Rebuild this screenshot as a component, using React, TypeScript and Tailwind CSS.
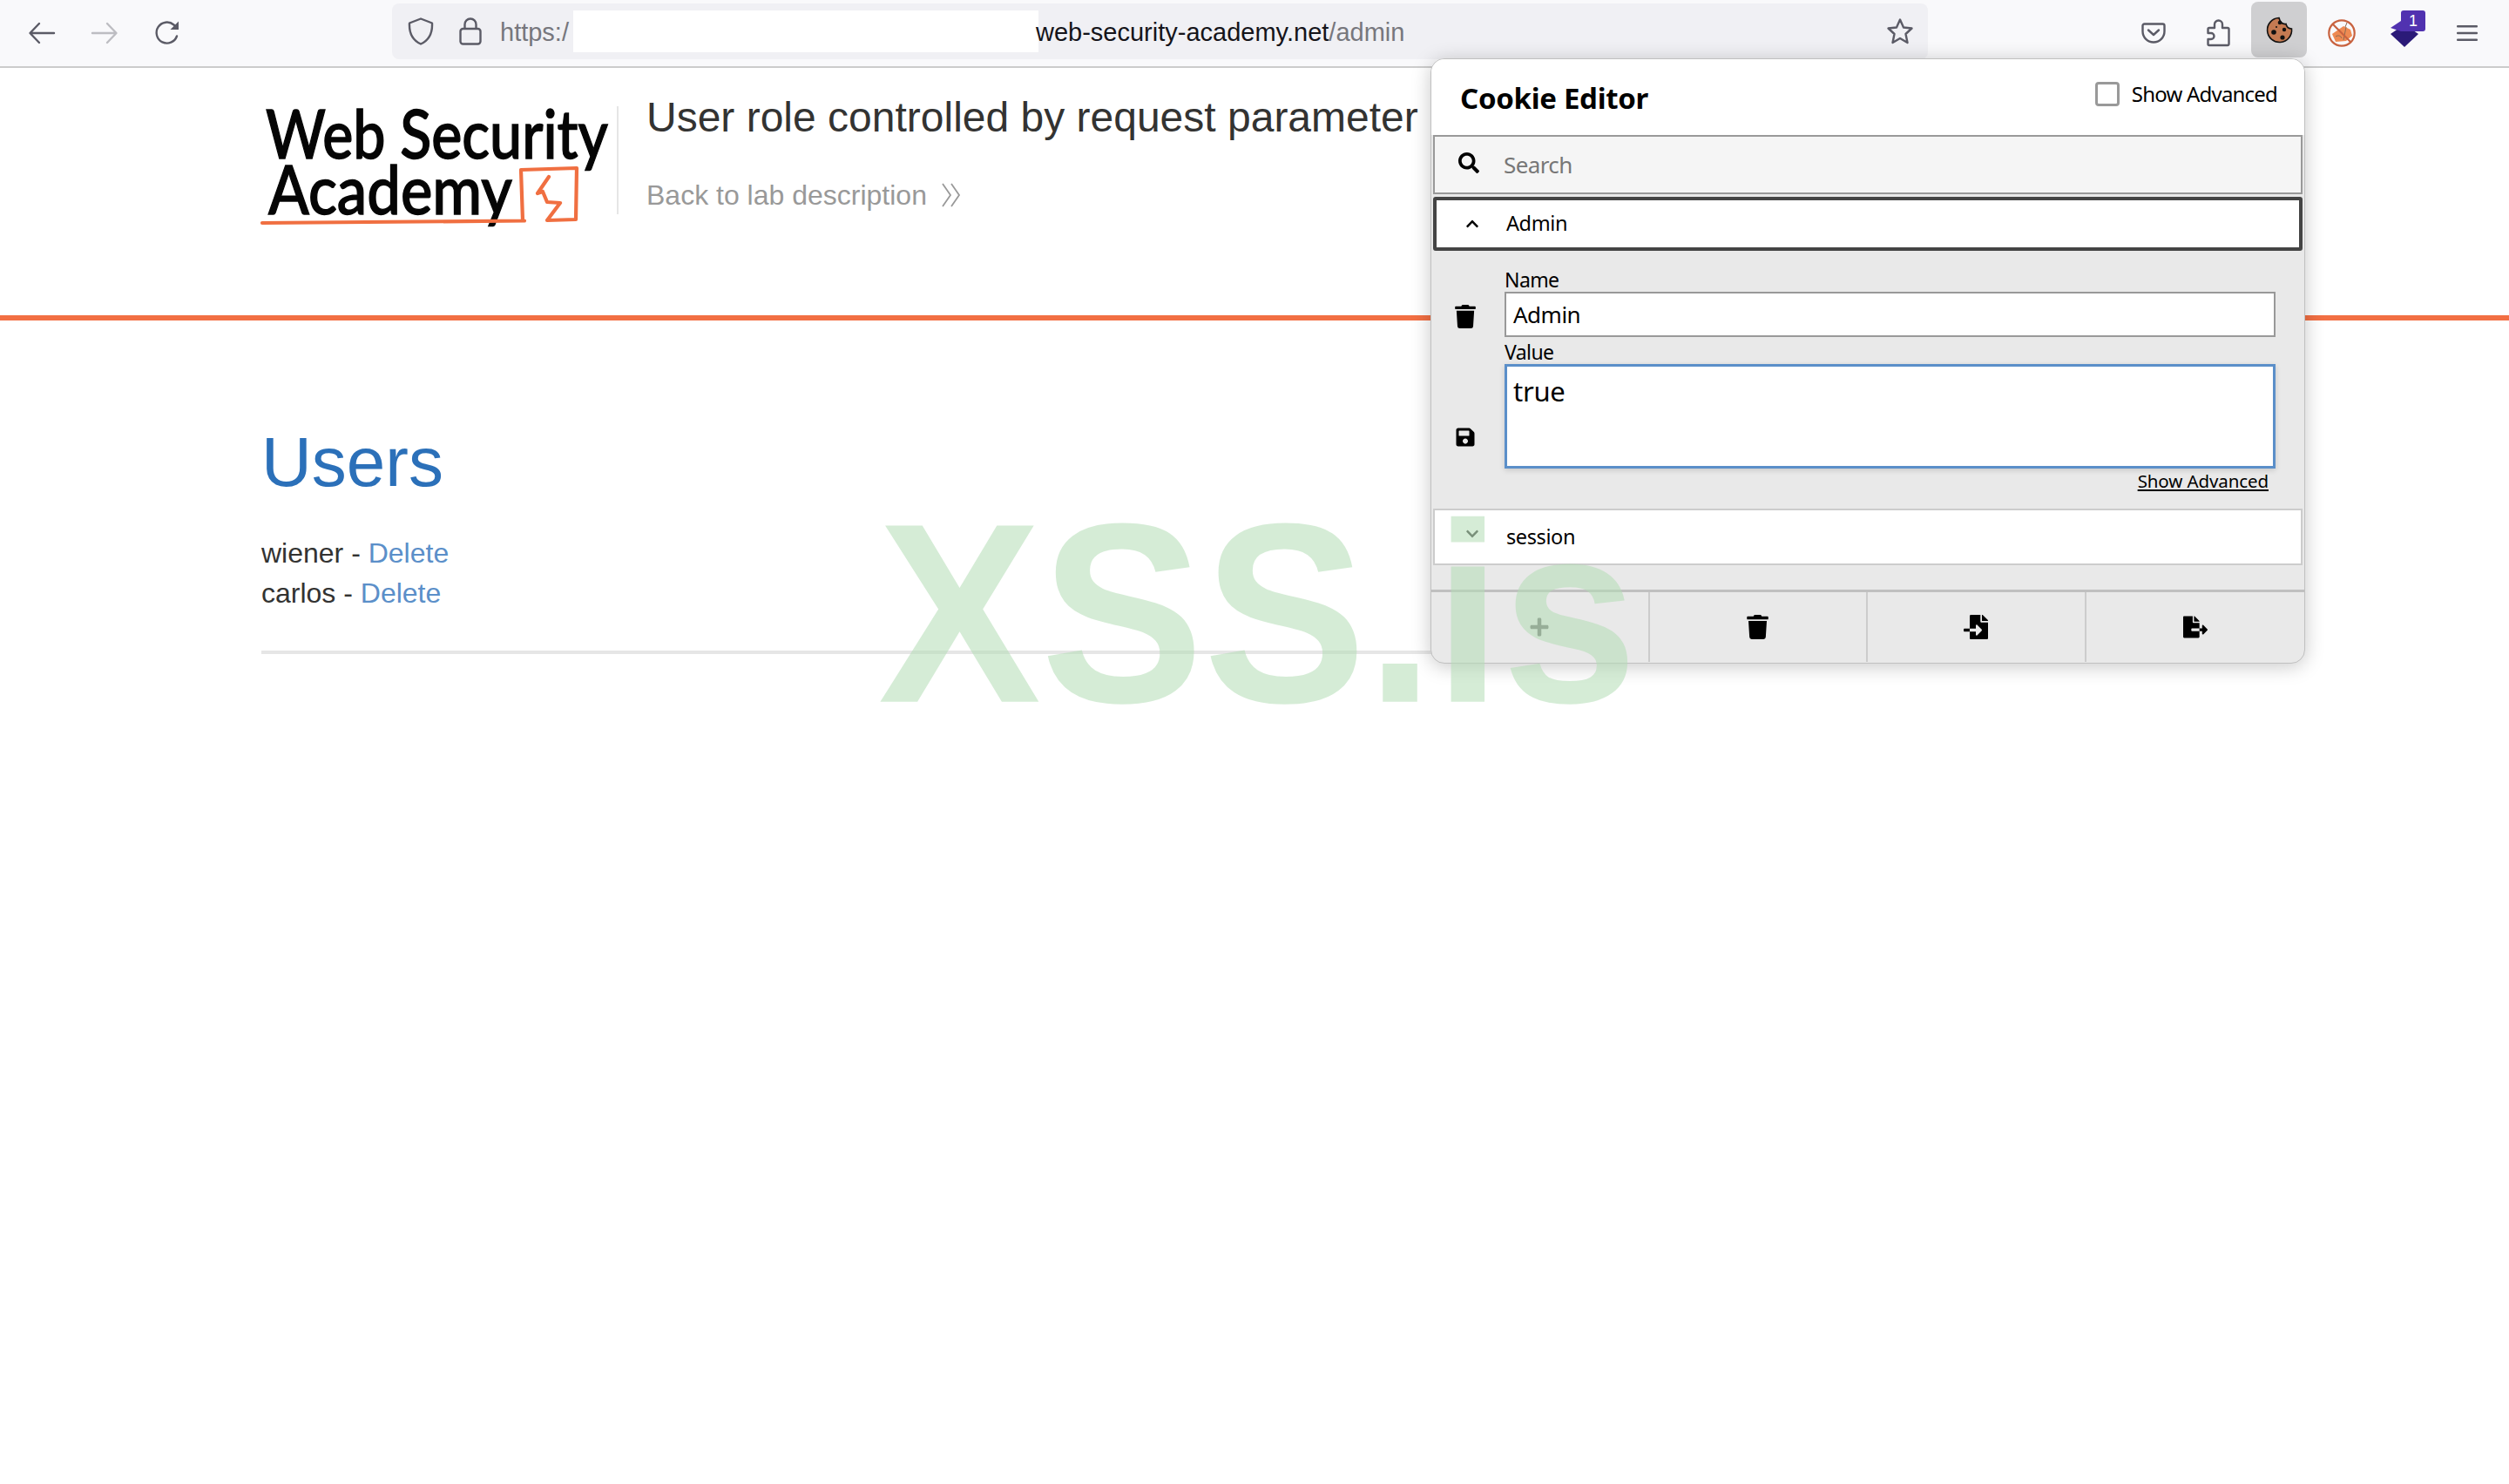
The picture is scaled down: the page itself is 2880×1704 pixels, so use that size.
import { FaChevronDown, FaChevronUp, FaFileExport, FaFileImport, FaPlus, FaSave, FaSearch, FaTrash } from "react-icons/fa";

const popupFont = "font-['Noto_Sans',sans-serif]";

function Back() {
  return (
    <svg width="32" height="32" viewBox="0 0 32 32" fill="none" stroke="#5b5b66" strokeWidth="2.4" strokeLinecap="round" strokeLinejoin="round">
      <path d="M30 16H3M13 5 2.5 16 13 27" />
    </svg>
  );
}

function Forward() {
  return (
    <svg width="32" height="32" viewBox="0 0 32 32" fill="none" stroke="#bdbdc2" strokeWidth="2.4" strokeLinecap="round" strokeLinejoin="round">
      <path d="M2 16h27M19 5l10.500 11L19 27" />
    </svg>
  );
}

function Reload() {
  return (
    <svg width="32" height="32" viewBox="0 0 32 32" fill="none">
      <path d="M27 19.500A12 12 0 1 1 23.500 6.500L27 10" stroke="#5b5b66" strokeWidth="2.4" strokeLinecap="round" />
      <path d="M29 2.500V12H19.500Z" fill="#5b5b66" />
    </svg>
  );
}

function Shield() {
  return (
    <svg width="30" height="32" viewBox="0 0 30 32" fill="none" stroke="#5b5b66" strokeWidth="2.400" strokeLinejoin="round">
      <path d="M15 1.500 28 6.500C28.500 17 25 26 15 30.500 5 26 1.500 17 2 6.500Z" />
    </svg>
  );
}

function Lock() {
  return (
    <svg width="26" height="32" viewBox="0 0 26 32" fill="none" stroke="#5b5b66" strokeWidth="2.400">
      <rect x="1.500" y="13" width="23" height="17.500" rx="3" />
      <path d="M6.500 13V8a6.500 6.500 0 0 1 13 0v5" />
    </svg>
  );
}

function Star() {
  return (
    <svg width="32" height="32" viewBox="0 0 32 32" fill="none" stroke="#5b5b66" strokeWidth="2.400" strokeLinejoin="round">
      <path d="M16 2.500 20 11.500 29.500 12.500 22.500 19 24.500 29 16 24 7.500 29 9.500 19 2.500 12.500 12 11.500Z" />
    </svg>
  );
}

function Pocket() {
  return (
    <svg width="28" height="24" viewBox="0 0 28 24" fill="none" stroke="#5b5b66" strokeWidth="2.400" strokeLinecap="round" strokeLinejoin="round">
      <path d="M3.500 1.500h21a2 2 0 0 1 2 2V10a12.500 12.500 0 0 1-25 0V3.500a2 2 0 0 1 2-2Z" />
      <path d="m8 8.500 6 5.500 6-5.500" />
    </svg>
  );
}

function Puzzle() {
  return (
    <svg width="28" height="32" viewBox="0 0 28 32" fill="none" stroke="#5b5b66" strokeWidth="2.400" strokeLinejoin="round">
      <path d="M10 10V6a4.500 4.500 0 0 1 9 0v4h6a1.500 1.500 0 0 1 1.500 1.500v17A1.500 1.500 0 0 1 25 30H4a1.500 1.500 0 0 1-1.500-1.500V23H6a3.500 3.500 0 0 0 0-7H2.500v-4.500A1.500 1.500 0 0 1 4 10Z" />
    </svg>
  );
}

function CookieIcon() {
  return (
    <svg width="32" height="32" viewBox="0 0 32 32">
      <path d="M16 2.500A14 14 0 1 0 30.500 15C26.500 15 24.500 12 24 9.500C20 10 17 7 16 2.500Z" fill="#c47a52" stroke="#111" strokeWidth="1.600" />
      <circle cx="17" cy="8" r="2.300" fill="#111" />
      <circle cx="10" cy="19" r="2.800" fill="#111" />
      <circle cx="22" cy="16" r="2.200" fill="#111" />
      <circle cx="20" cy="25" r="2.600" fill="#111" />
      <circle cx="13" cy="13" r="1" fill="#111" />
    </svg>
  );
}

function Blocker() {
  return (
    <svg width="32" height="32" viewBox="0 0 32 32" fill="none">
      <path d="M5 17 18 8l8 4 2 7-7 6-12 1Z" fill="#ee8a52" />
      <path d="M9 20c3-2 6-1 7 2M21 9l-3 15M22 4l-2 5M8 8l3 4" stroke="#8a6a52" strokeWidth="1" />
      <circle cx="16" cy="16" r="14.700" stroke="#c8623f" strokeWidth="2.200" />
      <path d="M6 6l20 20" stroke="#c8623f" strokeWidth="2.200" />
    </svg>
  );
}

function Flag() {
  return (
    <div className="relative w-[40px] h-[42px]">
      <svg className="absolute left-0 top-0" width="40" height="42" viewBox="0 0 40 42">
        <path d="M0 27 16 16 32 27 16 42Z" fill="#2b1a78" />
        <path d="M0 20 12 12h20v12H12Z" fill="#5132b0" />
      </svg>
      <span className="absolute right-0 top-0 w-[28px] h-[24px] rounded-[3px] bg-[#5132b0] text-white text-[18px] leading-[24px] text-center font-['Liberation_Sans',sans-serif]">
        1
      </span>
    </div>
  );
}

function Menu() {
  return (
    <svg width="24" height="18" viewBox="0 0 24 18" fill="#5b5b66">
      <rect y="0" width="24" height="2.400" rx="1" />
      <rect y="7.800" width="24" height="2.400" rx="1" />
      <rect y="15.600" width="24" height="2.400" rx="1" />
    </svg>
  );
}

function Toolbar() {
  return (
    <div className="h-[78px] bg-[#f9f9fb] border-b-2 border-[#cccccc] flex items-start font-['Liberation_Sans',sans-serif]">
      <div className="w-[450px] h-[76px] flex items-center pl-[32px] gap-[40px]">
        <Back />
        <Forward />
        <Reload />
      </div>
      <div className="mt-[4px] w-[1763px] h-[64px] rounded-[8px] bg-[#f0f0f4] flex items-center">
        <div className="w-[124px] pl-[18px] flex items-center gap-[29px] shrink-0">
          <Shield />
          <Lock />
        </div>
        <span className="text-[29px] leading-[36px] mt-[2px] text-[#77777d] w-[84px] shrink-0 overflow-hidden">https:/</span>
        <div className="w-[534px] h-[48px] bg-white shrink-0" />
        <span className="text-[29px] leading-[36px] mt-[2px] text-[#15141a] whitespace-nowrap -ml-[3px]">web-security-academy.net</span>
        <span className="text-[29px] leading-[36px] mt-[2px] text-[#77777d]">/admin</span>
        <div className="ml-auto pr-[16px]">
          <Star />
        </div>
      </div>
      <div className="flex-1 h-[76px] relative flex items-center pl-[245px]">
        <Pocket />
        <div className="ml-[46px]">
          <Puzzle />
        </div>
        <div className="ml-[24px] mt-[-8px] w-[64px] h-[64px] rounded-[8px] bg-[#cfcfd1] flex items-center justify-center">
          <CookieIcon />
        </div>
        <div className="ml-[24px]">
          <Blocker />
        </div>
        <div className="ml-[40px] -mt-[10px]">
          <Flag />
        </div>
        <div className="ml-[36px]">
          <Menu />
        </div>
      </div>
    </div>
  );
}

function Logo() {
  return (
    <svg width="420" height="180" viewBox="0 0 420 180" className="shrink-0" fontFamily="Lato, sans-serif" fontWeight="500" fill="#050505" stroke="#050505" strokeWidth="1.400">
      <text x="25" y="82" fontSize="78" textLength="393" lengthAdjust="spacingAndGlyphs">Web Security</text>
      <text x="28" y="146" fontSize="78" textLength="280" lengthAdjust="spacingAndGlyphs">Academy</text>
      <path d="M21 156 322 153.500M320 153 318 95 382 93 381 152 348 153 363 133 348 132 343 120 337 122 350 103" fill="none" stroke="#f06f41" strokeWidth="4.200" strokeLinejoin="round" strokeLinecap="round" />
    </svg>
  );
}

function Row({ icon, label, active }: { icon: React.ReactNode; label: string; active?: boolean }) {
  return (
    <div className={active ? "mx-[2px] mt-[3px] h-[62px] border-[4px] border-[#444444] rounded-[3px] bg-white flex items-center" : "mx-[2px] h-[65px] border-2 border-[#cccccc] bg-white flex items-center"}>
      <div className={active ? "w-[31px] ml-[33px] text-[16px]" : "w-[31px] ml-[35px] text-[16px] text-[#333333] -mt-[8px]"}>{icon}</div>
      <span className="ml-[16px] text-[23.5px] tracking-[-0.4px] text-black">{label}</span>
    </div>
  );
}

function CookiePopup() {
  return (
    <div className={`absolute left-[1642px] top-[67px] w-[1004px] h-[695px] rounded-[16px] border border-[#c0c0c0] bg-[#e9e9e9] shadow-[0_3px_22px_rgba(0,0,0,0.22)] overflow-hidden flex flex-col ${popupFont}`}>
      <div className="h-[87px] bg-white flex justify-between shrink-0">
        <h2 className="ml-[33px] mt-[24px] text-[33px] leading-[42px] font-bold text-black tracking-[-0.3px]">Cookie Editor</h2>
        <label className="mr-[31px] mt-[23px] h-[34px] flex items-center gap-[14px] text-[24px] tracking-[-0.8px] text-black">
          <span className="w-[28px] h-[28px] rounded-[4px] border-[3px] border-[#999999] bg-white" />
          Show Advanced
        </label>
      </div>
      <div className="mx-[2px] h-[68px] shrink-0 border-2 border-[#999999] bg-[#f5f5f5] flex items-center">
        <FaSearch className="ml-[27px] w-[24px] h-[24px] text-black -mt-[4px]" />
        <span className="ml-[28px] text-[26px] tracking-[-0.6px] text-[#777777]">Search</span>
      </div>
      <Row icon={<FaChevronUp />} label="Admin" active />
      <div className="h-[296px] shrink-0 flex relative">
        <div className="w-[84px] relative">
          <FaTrash className="absolute left-[27px] top-[62px] w-[24px] h-[27px] text-black" />
          <FaSave className="absolute left-[27px] top-[202px] w-[24px] h-[24px] text-black" />
        </div>
        <div className="w-[885px]">
          <div className="mt-[19px] text-[23px] leading-[28px] tracking-[-0.6px] text-black">Name</div>
          <div className="h-[52px] border-2 border-[#999999] bg-white flex items-center pl-[8px] text-[26px] tracking-[-0.5px] text-black">Admin</div>
          <div className="mt-[3px] text-[23px] leading-[28px] tracking-[-0.6px] text-black">Value</div>
          <div className="h-[120px] border-[3px] border-[#5b8fc9] bg-white pl-[7px] pt-[8px] text-[31px] leading-[40px] tracking-[-0.3px] text-black shadow-[0_2px_6px_rgba(0,0,0,0.15)]">true</div>
          <div className="text-right pr-[8px]">
            <span className="text-[20.500px] leading-[28px] tracking-[-0.1px] text-black underline">Show Advanced</span>
          </div>
        </div>
      </div>
      <Row icon={<FaChevronDown />} label="session" />
      <div className="h-[28px] shrink-0" />
      <div className="h-[83px] shrink-0 border-t-[3px] border-[#c0c0c0] grid grid-cols-4">
        <div className="flex items-center justify-center border-r-2 border-[#cccccc]">
          <FaPlus className="w-[24px] h-[24px] text-[#777777]" />
        </div>
        <div className="flex items-center justify-center border-r-2 border-[#cccccc]">
          <FaTrash className="w-[25px] h-[28px] text-black" />
        </div>
        <div className="flex items-center justify-center border-r-2 border-[#cccccc]">
          <FaFileImport className="w-[28px] h-[28px] text-black" />
        </div>
        <div className="flex items-center justify-center">
          <FaFileExport className="w-[28px] h-[28px] text-black" />
        </div>
      </div>
    </div>
  );
}

export default function App() {
  return (
    <div className="relative w-[2880px] h-[1704px] overflow-hidden bg-white font-['Liberation_Sans',sans-serif]">
      <Toolbar />
      <header className="h-[284px] pl-[280px] pt-[22px] flex items-start">
        <Logo />
        <div className="w-[2px] h-[124px] mt-[22px] ml-[8px] bg-[#e6e6e6]" />
        <div className="ml-[32px]">
          <h1 className="text-[48px] leading-[70px] text-[#333332]">User role controlled by request parameter</h1>
          <div className="mt-[30px] flex items-center gap-[16px] text-[32px] leading-[48px] text-[#999999]">
            Back to lab description
            <svg width="24" height="28" viewBox="0 0 24 28" fill="none" stroke="#999999" strokeWidth="1.800">
              <path d="M2 1l9 13-9 13M12 1l9 13-9 13" />
            </svg>
          </div>
        </div>
      </header>
      <div className="h-[6px] bg-[#f26f43]" />
      <main className="px-[300px]">
        <h2 className="mt-[117px] text-[80px] leading-[92px] text-[#2b70b9]">Users</h2>
        <div className="mt-[35px] text-[32px] leading-[46px] text-[#333332]">
          <div>
            wiener - <a className="text-[#5b8fc9]">Delete</a>
          </div>
          <div>
            carlos - <a className="text-[#5b8fc9]">Delete</a>
          </div>
        </div>
        <div className="mt-[43px] h-[4px] bg-[#e6e6e6]" />
      </main>
      <CookiePopup />
      <div className="absolute left-[1008px] top-[543px] text-[280px] leading-[322px] font-bold text-[rgba(178,220,180,0.55)] scale-y-[1.05] pointer-events-none whitespace-nowrap">
        XSS.is
      </div>
    </div>
  );
}
